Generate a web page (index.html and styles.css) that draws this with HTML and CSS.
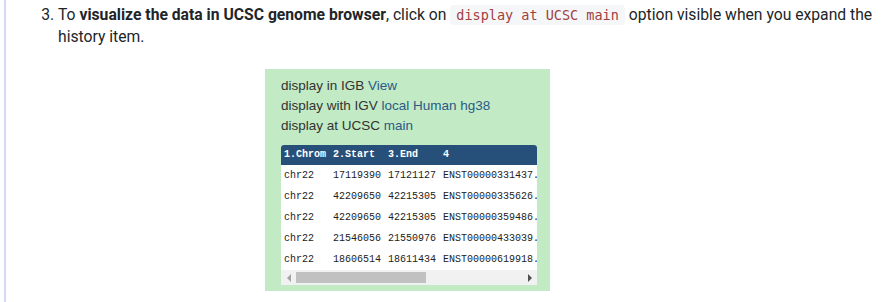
FILE: index.html
```html
<!DOCTYPE html>
<html lang="en">

<head>
    <meta charset="UTF-8" />
    <meta name="viewport" content="width=device-width, initial-scale=1.0" />
    <title>Visualize in UCSC</title>
    <link rel="stylesheet" href="styles.css">
</head>

<body>

    <div class="hands-on">
        <ol start="3">
            <li>
                <p>To <strong>visualize the data in UCSC genome browser</strong>, click on
                    <code>display at UCSC main</code> option visible when you expand the history item.</p>

                <div class="peek">
                    <div class="display-apps">
                        <div>display in IGB <a href="#">View</a></div>
                        <div>display with IGV <a href="#">local Human hg38</a></div>
                        <div>display at UCSC <a href="#">main</a></div>
                    </div>
                    <div class="peek-table">
                        <table>
                            <tr>
                                <th>1.Chrom</th>
                                <th>2.Start</th>
                                <th>3.End</th>
                                <th>4</th>
                                <th>5</th>
                                <th>6</th>
                                <th>7</th>
                                <th>8</th>
                                <th>9</th>
                            </tr>
                            <tr>
                                <td>chr22</td><td>17119390</td><td>17121127</td><td>ENST00000331437.4</td><td>0</td><td>-</td><td>17119390</td><td>17121127</td><td>0</td>
                            </tr>
                            <tr>
                                <td>chr22</td><td>42209650</td><td>42215305</td><td>ENST00000335626.5</td><td>0</td><td>+</td><td>42209650</td><td>42215305</td><td>0</td>
                            </tr>
                            <tr>
                                <td>chr22</td><td>42209650</td><td>42215305</td><td>ENST00000359486.7</td><td>0</td><td>+</td><td>42209650</td><td>42215305</td><td>0</td>
                            </tr>
                            <tr>
                                <td>chr22</td><td>21546056</td><td>21550976</td><td>ENST00000433039.1</td><td>0</td><td>+</td><td>21546056</td><td>21550976</td><td>0</td>
                            </tr>
                            <tr>
                                <td>chr22</td><td>18606514</td><td>18611434</td><td>ENST00000619918.1</td><td>0</td><td>-</td><td>18606514</td><td>18611434</td><td>0</td>
                            </tr>
                        </table>
                    </div>
                    <!-- fake horizontal scrollbar, headless chrome hides the real one -->
                    <div class="scrollbar">
                        <div class="arrow arrow-left"></div>
                        <div class="track">
                            <div class="thumb"></div>
                        </div>
                        <div class="arrow arrow-right"></div>
                    </div>
                </div>
            </li>
        </ol>
    </div>

</body>

</html>
```

FILE: styles.css
```css
body {
    margin: 0;
    font-family: Roboto, "Noto Sans", Arial, sans-serif;
    color: #212529;
    background: #fff;
}

.hands-on {
    margin-left: 4px;
    border-left: 2px solid #d3daf8;
    height: 302px;
}

ol {
    margin: 0;
    padding: 4px 0 0 52px;
    width: 816px;
}

li {
    font-size: 15.7px;
    line-height: 22px;
}

li p {
    margin: 0;
}

strong {
    font-weight: bold;
}

code {
    font-family: "DejaVu Sans Mono", "Liberation Mono", monospace;
    font-size: 13.5px;
    color: #a0403e;
    background: #f5f6f8;
    border-radius: 4px;
    padding: 2px 6px;
}

.peek {
    width: 269px;
    margin: 21px 0 0 207px;
    padding: 7px 0 6px 16px;
    background: #c2eac4;
    font-family: "Liberation Sans", Arial, sans-serif;
}

.display-apps {
    font-size: 13.5px;
    line-height: 20px;
    color: #333;
}

.display-apps a {
    color: #2b5a87;
    text-decoration: none;
}

.peek-table {
    width: 256px;
    margin-top: 9px;
    overflow: hidden;
    background: #fff;
    border-radius: 3px 3px 0 0;
}

table {
    border-collapse: collapse;
    font-family: "Liberation Mono", "DejaVu Sans Mono", monospace;
    font-size: 10px;
    line-height: 12px;
    white-space: nowrap;
}

tr {
    height: 21px;
}

tr:first-child {
    height: 20px;
}

th {
    background: #26507a;
    color: #fff;
    font-weight: bold;
    text-align: left;
    padding: 0 4px 0 3px;
}

td {
    padding: 0 4px 0 3px;
    color: #222;
}

.scrollbar {
    width: 256px;
    height: 15px;
    display: flex;
    background: #f1f1f1;
}

.arrow {
    width: 15px;
    height: 15px;
    display: flex;
    align-items: center;
    justify-content: center;
}

.arrow::before {
    content: "";
    border-top: 4px solid transparent;
    border-bottom: 4px solid transparent;
}

.arrow-left::before {
    border-right: 4px solid #a3a3a3;
}

.arrow-right::before {
    border-left: 4px solid #505050;
}

.track {
    flex: 1;
    padding: 2px 0;
}

.thumb {
    width: 130px;
    height: 11px;
    background: #c1c1c1;
}
```
